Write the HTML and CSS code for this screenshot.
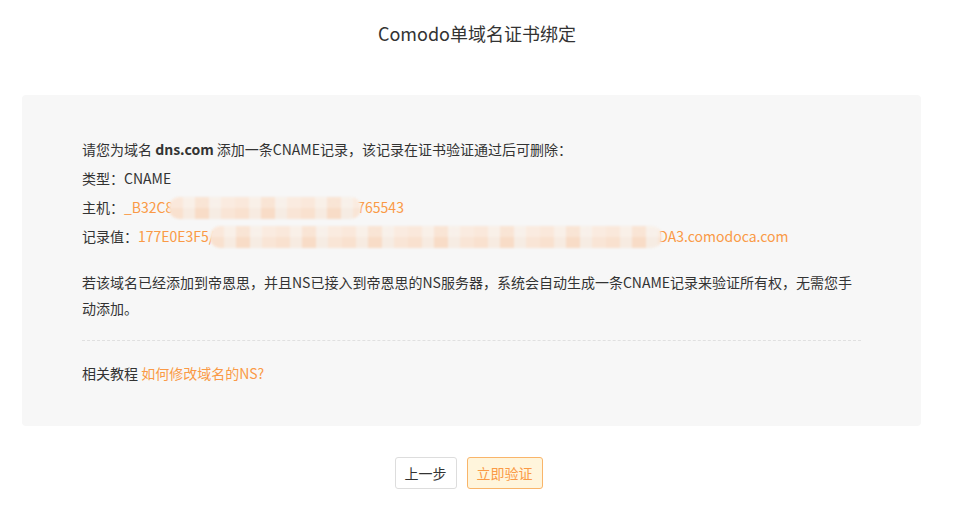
FILE: index.html
```html
<!DOCTYPE html>
<html lang="zh-CN">
<head>
    <meta charset="UTF-8">
    <title>Comodo单域名证书绑定</title>
    <link rel="stylesheet" href="styles.css">
</head>
<body>
    <h2 class="title">Comodo单域名证书绑定</h2>

    <div class="panel">
        <p class="line">请您为域名 <b>dns.com</b> 添加一条CNAME记录，该记录在证书验证通过后可删除：</p>
        <p class="line">类型：CNAME</p>
        <p class="line">主机：<span class="val">_B32C8<span class="mosaic m_host"></span>765543</span></p>
        <p class="line">记录值：<span class="val">177E0E3F5/<span class="mosaic m_rec"></span>DA3.comodoca.com</span></p>

        <p class="note">若该域名已经添加到帝恩思，并且NS已接入到帝恩思的NS服务器，系统会自动生成一条CNAME记录来验证所有权，无需您手动添加。</p>

        <div class="dash"></div>

        <p class="help">相关教程 <a href="#">如何修改域名的NS?</a></p>
    </div>

    <div class="btns">
        <button class="btn">上一步</button>
        <button class="btn btn_main">立即验证</button>
    </div>
</body>
</html>
```

FILE: styles.css
```css
body {
    margin: 0;
    background: #fff;
    font-family: "Noto Sans CJK SC", "Noto Sans", sans-serif;
    color: #333;
    font-size: 14px;
}
.title {
    margin: 0;
    padding-top: 20px;
    text-align: center;
    font-size: 18px;
    font-weight: normal;
    line-height: 26px;
    color: #333;
}
.panel {
    margin: 49px 33px 0 22px;
    padding: 40px 60px 40px 60px;
    background: #f7f7f7;
    border-radius: 4px;
}
.line {
    margin: 0;
    line-height: 29px;
    height: 29px;
}
.line b {
    font-weight: bold;
}
.val {
    color: #fa9a46;
}
.mosaic {
    display: inline-block;
    vertical-align: middle;
    height: 22px;
    margin: -3px -4px 0 -4px;
    border-radius: 10px;
    filter: blur(1px);
    background:
        linear-gradient(180deg, rgba(255, 255, 255, 0.25) 0 50%, rgba(255, 255, 255, 0) 50% 100%),
        repeating-linear-gradient(90deg, #f9e1cf 0 14px, #f7ebe1 14px 26px, #f8dcc7 26px 40px, #f6ece3 40px 52px, #f9e5d6 52px 66px);
}
.m_host {
    width: 192px;
}
.m_rec {
    width: 452px;
}
.note {
    margin: 18px 0 0 0;
    line-height: 26px;
}
.dash {
    margin-top: 19px;
    border-top: 1px dashed #e0e0e0;
}
.help {
    margin: 19px 0 0 0;
    line-height: 26px;
}
.help a {
    color: #fa9a46;
    text-decoration: none;
}
.btns {
    display: flex;
    justify-content: center;
    gap: 10px;
    margin-top: 31px;
    padding-right: 17px;
}
.btn {
    height: 32px;
    padding: 0 9px;
    font-family: inherit;
    font-size: 14px;
    color: #333;
    background: #fff;
    border: 1px solid #ddd;
    border-radius: 3px;
}
.btn_main {
    color: #fa9a46;
    background: #fff5dc;
    border-color: #f9b56a;
}
```
